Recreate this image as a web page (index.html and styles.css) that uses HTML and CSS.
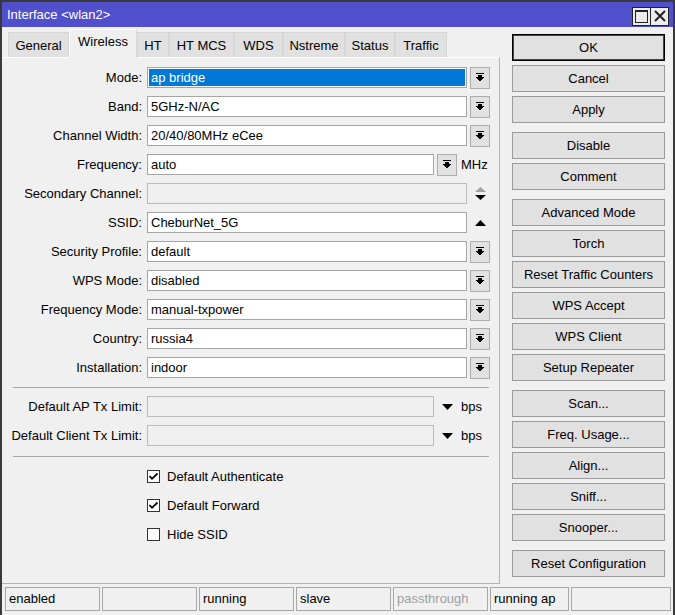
FILE: index.html
```html
<!DOCTYPE html>
<html>
<head>
<meta charset="utf-8">
<link rel="stylesheet" href="styles.css">
</head>
<body>
<div class="window">
  <div class="titlebar">
    <span class="title">Interface &lt;wlan2&gt;</span>
    <div class="tbtns">
      <span class="tb"><span class="maxicon"></span></span>
      <span class="tb"><svg width="12" height="12" viewBox="0 0 12 12"><path d="M1 1 L11 11 M11 1 L1 11" stroke="#222" stroke-width="2"/></svg></span>
    </div>
  </div>
  <div class="main">
    <div class="left">
      <div class="tabs">
        <div class="tab">General</div>
        <div class="tab active">Wireless</div>
        <div class="tab">HT</div>
        <div class="tab">HT MCS</div>
        <div class="tab">WDS</div>
        <div class="tab">Nstreme</div>
        <div class="tab">Status</div>
        <div class="tab">Traffic</div>
      </div>
      <div class="panel">
        <div class="sec first">
          <div class="row"><span class="lbl">Mode:</span><span class="field selected">ap bridge</span><span class="dd"><svg width="8" height="9" viewBox="0 0 8 9" shape-rendering="crispEdges"><rect x="0" y="0" width="8" height="1"/><rect x="2" y="2" width="4" height="2"/><polygon points="0,4 8,4 4,8.5"/></svg></span></div>
          <div class="row"><span class="lbl">Band:</span><span class="field">5GHz-N/AC</span><span class="dd"><svg width="8" height="9" viewBox="0 0 8 9" shape-rendering="crispEdges"><rect x="0" y="0" width="8" height="1"/><rect x="2" y="2" width="4" height="2"/><polygon points="0,4 8,4 4,8.5"/></svg></span></div>
          <div class="row"><span class="lbl">Channel Width:</span><span class="field">20/40/80MHz eCee</span><span class="dd"><svg width="8" height="9" viewBox="0 0 8 9" shape-rendering="crispEdges"><rect x="0" y="0" width="8" height="1"/><rect x="2" y="2" width="4" height="2"/><polygon points="0,4 8,4 4,8.5"/></svg></span></div>
          <div class="row"><span class="lbl">Frequency:</span><span class="field short">auto</span><span class="dd"><svg width="8" height="9" viewBox="0 0 8 9" shape-rendering="crispEdges"><rect x="0" y="0" width="8" height="1"/><rect x="2" y="2" width="4" height="2"/><polygon points="0,4 8,4 4,8.5"/></svg></span><span class="unit">MHz</span></div>
          <div class="row"><span class="lbl">Secondary Channel:</span><span class="field disabled"></span><span class="arr"><svg width="11" height="13" viewBox="0 0 11 13"><polygon points="0,5 11,5 5.5,0" fill="#a0a0a0"/><polygon points="0,8 11,8 5.5,13" fill="#000"/></svg></span></div>
          <div class="row"><span class="lbl">SSID:</span><span class="field">CheburNet_5G</span><span class="arr"><svg width="11" height="6" viewBox="0 0 11 6"><polygon points="0,6 11,6 5.5,0" fill="#000"/></svg></span></div>
          <div class="row"><span class="lbl">Security Profile:</span><span class="field">default</span><span class="dd"><svg width="8" height="9" viewBox="0 0 8 9" shape-rendering="crispEdges"><rect x="0" y="0" width="8" height="1"/><rect x="2" y="2" width="4" height="2"/><polygon points="0,4 8,4 4,8.5"/></svg></span></div>
          <div class="row"><span class="lbl">WPS Mode:</span><span class="field">disabled</span><span class="dd"><svg width="8" height="9" viewBox="0 0 8 9" shape-rendering="crispEdges"><rect x="0" y="0" width="8" height="1"/><rect x="2" y="2" width="4" height="2"/><polygon points="0,4 8,4 4,8.5"/></svg></span></div>
          <div class="row"><span class="lbl">Frequency Mode:</span><span class="field">manual-txpower</span><span class="dd"><svg width="8" height="9" viewBox="0 0 8 9" shape-rendering="crispEdges"><rect x="0" y="0" width="8" height="1"/><rect x="2" y="2" width="4" height="2"/><polygon points="0,4 8,4 4,8.5"/></svg></span></div>
          <div class="row"><span class="lbl">Country:</span><span class="field">russia4</span><span class="dd"><svg width="8" height="9" viewBox="0 0 8 9" shape-rendering="crispEdges"><rect x="0" y="0" width="8" height="1"/><rect x="2" y="2" width="4" height="2"/><polygon points="0,4 8,4 4,8.5"/></svg></span></div>
          <div class="row"><span class="lbl">Installation:</span><span class="field">indoor</span><span class="dd"><svg width="8" height="9" viewBox="0 0 8 9" shape-rendering="crispEdges"><rect x="0" y="0" width="8" height="1"/><rect x="2" y="2" width="4" height="2"/><polygon points="0,4 8,4 4,8.5"/></svg></span></div>
        </div>
        <div class="sep"></div>
        <div class="sec">
          <div class="row"><span class="lbl">Default AP Tx Limit:</span><span class="field short disabled"></span><span class="arr"><svg width="11" height="6" viewBox="0 0 11 6"><polygon points="0,0 11,0 5.5,6" fill="#000"/></svg></span><span class="unit">bps</span></div>
          <div class="row"><span class="lbl">Default Client Tx Limit:</span><span class="field short disabled"></span><span class="arr"><svg width="11" height="6" viewBox="0 0 11 6"><polygon points="0,0 11,0 5.5,6" fill="#000"/></svg></span><span class="unit">bps</span></div>
        </div>
        <div class="sep second"></div>
        <div class="sec checks">
          <div class="crow"><span class="cb"><svg width="11" height="11" viewBox="0 0 11 11"><polyline points="1.5,5 4,7.8 9.5,2.5" fill="none" stroke="#000" stroke-width="1.8"/></svg></span>Default Authenticate</div>
          <div class="crow"><span class="cb"><svg width="11" height="11" viewBox="0 0 11 11"><polyline points="1.5,5 4,7.8 9.5,2.5" fill="none" stroke="#000" stroke-width="1.8"/></svg></span>Default Forward</div>
          <div class="crow"><span class="cb"></span>Hide SSID</div>
        </div>
      </div>
    </div>
    <div class="buttons">
      <div class="grp">
        <div class="btn default">OK</div>
        <div class="btn">Cancel</div>
        <div class="btn">Apply</div>
      </div>
      <div class="grp">
        <div class="btn">Disable</div>
        <div class="btn">Comment</div>
      </div>
      <div class="grp">
        <div class="btn">Advanced Mode</div>
        <div class="btn">Torch</div>
        <div class="btn">Reset Traffic Counters</div>
        <div class="btn">WPS Accept</div>
        <div class="btn">WPS Client</div>
        <div class="btn">Setup Repeater</div>
      </div>
      <div class="grp">
        <div class="btn">Scan...</div>
        <div class="btn">Freq. Usage...</div>
        <div class="btn">Align...</div>
        <div class="btn">Sniff...</div>
        <div class="btn">Snooper...</div>
      </div>
      <div class="grp">
        <div class="btn">Reset Configuration</div>
      </div>
    </div>
  </div>
  <div class="status">
    <div class="cell c1">enabled</div>
    <div class="cell c2"></div>
    <div class="cell c3">running</div>
    <div class="cell c4">slave</div>
    <div class="cell c5 dim">passthrough</div>
    <div class="cell c6">running ap</div>
    <div class="cell c7"></div>
  </div>
</div>
</body>
</html>
```

FILE: styles.css
```css
* { box-sizing: border-box; }
html, body { margin: 0; padding: 0; }
body {
  background: #f0f0f0;
  font-family: "Liberation Sans", Arial, sans-serif;
  font-size: 13px;
  color: #000;
}
.window {
  width: 675px;
  height: 615px;
  border-top: 2px solid #3a3a3a;
  border-left: 2px solid #3a3a3a;
  border-right: 2px solid #3a3a3a;
  background: #f0f0f0;
  display: flex;
  flex-direction: column;
  overflow: hidden;
}
.titlebar {
  height: 25px;
  flex: none;
  background: #5050cc;
  color: #fff;
  display: flex;
  align-items: center;
  padding-left: 5px;
  padding-right: 4px;
}
.title { flex: 1; }
.tbtns { display: flex; margin-top: 3px; }
.tb {
  width: 19px;
  height: 19px;
  background: #ececec;
  border: 1px solid #222;
  display: flex;
  align-items: center;
  justify-content: center;
}
.tb + .tb { margin-left: -1px; }
.maxicon {
  width: 13px;
  height: 13px;
  border: 1px solid #222;
  border-top-width: 2px;
}
.main {
  height: 560px;
  flex: none;
  display: flex;
}
.left {
  width: 498px;
  display: flex;
  flex-direction: column;
}
.tabs {
  height: 30px;
  display: flex;
  align-items: flex-end;
  padding-left: 6px;
  position: relative;
  z-index: 1;
}
.tab {
  height: 25px;
  background: #e1e1e1;
  border: 1px solid #d6d6d6;
  border-bottom: none;
  display: flex;
  align-items: center;
  justify-content: center;
  padding-top: 1px;
}
.tab:nth-child(1) { width: 61px; }
.tab:nth-child(2) { width: 68px; }
.tab:nth-child(3) { width: 32px; }
.tab:nth-child(4) { width: 65px; }
.tab:nth-child(5) { width: 49px; }
.tab:nth-child(6) { width: 62px; }
.tab:nth-child(7) { width: 50px; }
.tab:nth-child(8) { width: 52px; }
.tab.active {
  height: 29px;
  background: #f0f0f0;
  border-color: #fff #dadada #fff #fff;
  margin-bottom: -1px;
  padding-top: 0;
  padding-bottom: 5px;
}
.panel {
  height: 527px;
  border-top: 1px solid #fff;
  border-right: 1px solid #b4b4b4;
  border-bottom: 1px solid #b4b4b4;
  display: flex;
  flex-direction: column;
}
.sec {
  display: flex;
  flex-direction: column;
  gap: 8px;
}
.sec.first { padding-top: 9px; }
.row {
  display: flex;
  align-items: center;
  height: 21px;
}
.lbl {
  width: 140px;
  text-align: right;
  margin-right: 5px;
  white-space: nowrap;
}
.field {
  width: 320px;
  height: 21px;
  border: 1px solid #a5a5a5;
  background: #fff;
  padding-left: 3px;
  line-height: 19px;
  white-space: nowrap;
  overflow: hidden;
}
.field.short { width: 287px; }
.field.disabled { background: #f0f0f0; border-color: #bcbcbc; }
.field.selected {
  background: #0078d7;
  color: #fff;
  box-shadow: inset 0 0 0 1px #fff;
}
.dd {
  width: 20px;
  height: 22px;
  margin-left: 3px;
  background: #e1e1e1;
  border: 1px solid #adadad;
  display: flex;
  align-items: center;
  justify-content: center;
}
.arr {
  width: 20px;
  height: 21px;
  margin-left: 3px;
  display: flex;
  align-items: center;
  justify-content: center;
}
.unit { margin-left: 4px; }
.sep {
  height: 1px;
  background: #a8a8a8;
  margin: 9px 10px 8px 11px;
}
.sep.second { margin-top: 10px; }
.checks { padding-top: 1px; }
.crow {
  display: flex;
  align-items: center;
  height: 21px;
  padding-left: 145px;
}
.cb {
  width: 13px;
  height: 13px;
  border: 1px solid #333;
  background: #fff;
  margin-right: 7px;
  display: flex;
  align-items: center;
  justify-content: center;
}
.buttons {
  margin-left: 12px;
  width: 153px;
  padding-top: 7px;
  display: flex;
  flex-direction: column;
  gap: 9px;
}
.grp {
  display: flex;
  flex-direction: column;
  gap: 4px;
}
.btn {
  height: 27px;
  background: #e1e1e1;
  border: 1px solid #9a9a9a;
  display: flex;
  align-items: center;
  justify-content: center;
  white-space: nowrap;
}
.btn.default {
  border: 1px solid #000;
  box-shadow: inset 0 0 0 1px #444;
}
.status {
  height: 24px;
  flex: none;
  display: flex;
  gap: 2px;
  padding-left: 3px;
}
.cell {
  height: 24px;
  border: 1px solid #a8a8a8;
  padding-left: 3px;
  line-height: 22px;
  white-space: nowrap;
}
.c1, .c2, .c3, .c4, .c5 { width: 95px; }
.c6 { width: 79px; }
.c7 { width: 100px; }
.dim { color: #a0a0a0; }
```
